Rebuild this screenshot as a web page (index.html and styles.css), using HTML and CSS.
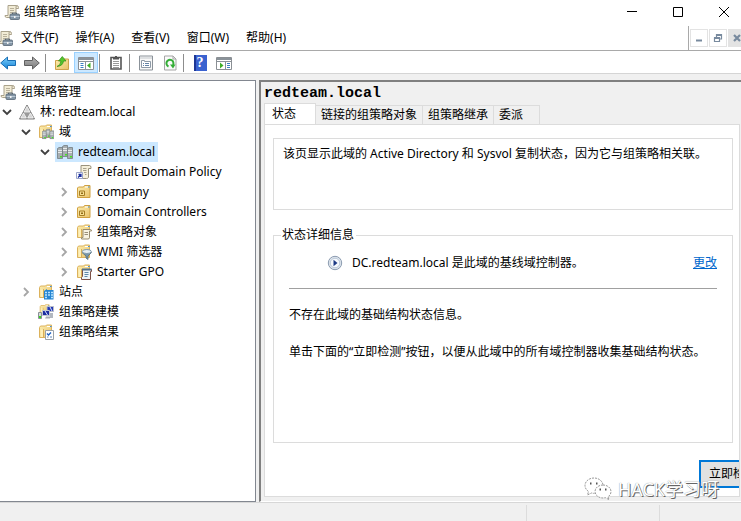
FILE: index.html
```html
<!DOCTYPE html>
<html lang="zh-CN">
  <head>
    <meta charset="utf-8">
    <title>组策略管理</title>
    <link rel="stylesheet" href="styles.css">
  </head>
  <body>
    <svg class="sprite" aria-hidden="true">
      <defs>
        <linearGradient id="gold" x1="0" y1="0" x2="1" y2="1">
          <stop offset="0" stop-color="#fdeeb0" />
          <stop offset="1" stop-color="#e8c26a" />
        </linearGradient>
        <linearGradient id="blue" x1="0" y1="0" x2="0" y2="1">
          <stop offset="0" stop-color="#7fd0fa" />
          <stop offset="1" stop-color="#1583d8" />
        </linearGradient>
        <linearGradient id="grey" x1="0" y1="0" x2="0" y2="1">
          <stop offset="0" stop-color="#b4b4b4" />
          <stop offset="1" stop-color="#7a7a7a" />
        </linearGradient>
      </defs>
      <symbol id="scroll" viewBox="0 0 16 16">
        <path d="M4 1.500h8.500q2 0 2 2v1h-2.500v9H2.500q-1.500 0-1.500-2h3z" fill="#f2ecd6" stroke="#aaa28c" />
        <path d="M12 4.500v-1.500q0-1.500 1.200-1.500" fill="none" stroke="#aaa28c" />
        <path d="M6 4.500h4M6 6.500h4M6 8.500h3" stroke="#b9b19b" />
      </symbol>
      <symbol id="gpm" viewBox="0 0 16 16">
        <use href="#scroll" />
        <path d="M8.500 10.500v-1.500h4v1.500" fill="none" stroke="#56636f" />
        <rect x="6" y="10" width="9.500" height="5.500" rx="1" fill="#8496a6" stroke="#566573" stroke-width=".8" />
        <path d="M6.500 12.500h9" stroke="#b8c7d4" />
        <path d="M10 12h1.500v2H10z" fill="#f3f3f3" />
      </symbol>
      <symbol id="folder" viewBox="0 0 16 16">
        <path d="M1.500 3.500l1-1.500h5l1-1h5v12.500h-12z" fill="url(#gold)" stroke="#dcb25c" />
        <path d="M9 2.500h3" stroke="#fff" />
        <path d="M12 2.500h1.500" stroke="#3b8fe0" />
        <path d="M2.500 5.500h3v7.500h-3z" fill="#fff0b8" />
        <path d="M5.500 5v8.500" stroke="#d9ae58" />
      </symbol>
      <symbol id="forest" viewBox="0 0 16 16">
        <path d="M8 1L15.500 15H.5z" fill="#9a9a9a" stroke="#7e7e7e" />
        <path d="M8 2.500l3 5.500H5zM4.500 9l2.800 5H1.800zM11.500 9l2.800 5H8.700z" fill="#d5d5d5" stroke="#fff" stroke-width=".7" />
      </symbol>
      <symbol id="tower" viewBox="0 0 6 12">
        <path d="M.5 1.500L2 .5h3.500v11h-5z" fill="#a8afb2" stroke="#747c80" stroke-width=".8" />
        <path d="M1 3.500h4M1 5.500h4" stroke="#e6eaeb" />
        <path d="M3 9h2v1.500H3z" fill="#43e321" />
      </symbol>
      <symbol id="servers" viewBox="0 0 16 16">
        <use href="#tower" x="5" y="1" width="6" height="12" />
        <use href="#tower" x="0" y="3" width="6" height="12" />
        <use href="#tower" x="10" y="3" width="6" height="12" />
      </symbol>
      <symbol id="domains" viewBox="0 0 16 16">
        <use href="#folder" />
        <use href="#servers" x="4" y="4" width="12" height="12" />
      </symbol>
      <symbol id="gpo-link" viewBox="0 0 16 16">
        <path d="M5 1.500h8.500q1.500 0 1.500 2v1h-2.500v9q-.5 1-2 1H3V12h2z" fill="#f5efda" stroke="#9a927c" />
        <path d="M7 4.500h3.500M7 6.500h3.500M8 8.500h2.500M9 10.500h1.500" stroke="#aaa28c" />
        <path d="M.5 8.500h6v6h-6z" fill="#fff" stroke="#9aa4c8" />
        <path d="M2 13.500l3-3M2.500 10.500H5V13" fill="none" stroke="#1a2fa0" stroke-width="1.300" />
      </symbol>
      <symbol id="ou" viewBox="0 0 16 16">
        <path d="M1.500 4l1-1h5l1-1.500h5.500v12h-12.500z" fill="url(#gold)" stroke="#d0a040" />
        <path d="M9 3h3" stroke="#fff" />
        <path d="M12 3h1.500" stroke="#3b8fe0" />
        <path d="M3.500 7h5v4.500h-5z" fill="#f7df93" stroke="#a67f25" />
        <path d="M5 8.500h2v1.500H5z" fill="#8f6a19" />
      </symbol>
      <symbol id="gpos" viewBox="0 0 16 16">
        <use href="#folder" />
        <path d="M7 5.500h7.500q1 0 1 1.500h-2v6.500q0 1.500-1.500 1.500H5.500v-1.500H7z" fill="#f8f3e2" stroke="#988c70" />
        <path d="M8.500 8.500h3.500M8.500 10.500h3.500" stroke="#998f79" />
      </symbol>
      <symbol id="wmi" viewBox="0 0 16 16">
        <use href="#folder" />
        <path d="M6 8.500h9.500l-3.500 3.500v3.500l-2-1.500v-2z" fill="#7896a8" stroke="#506c7d" stroke-width=".8" />
        <ellipse cx="10.800" cy="7.500" rx="4.500" ry="2" fill="#e6eff5" stroke="#7f99a9" />
      </symbol>
      <symbol id="starter" viewBox="0 0 16 16">
        <use href="#folder" />
        <path d="M6.500 5.500h9v2h-1v8h-9v-2l1-1z" fill="#eef4f8" stroke="#7c5146" />
        <path d="M6 5.500h9.500" stroke="#54718c" stroke-width="2" />
        <path d="M8.500 8.500h4M8.500 10.500h4M8.500 12.500h3" stroke="#5f88a8" />
      </symbol>
      <symbol id="sites" viewBox="0 0 16 16">
        <use href="#folder" />
        <path d="M6 7l3-2v1h6.500v9.500H6z" fill="#2585d2" />
        <path d="M7 8.500h2M10 8.500h2M13 8.500h2M7 11h2M10 11h2M13 11h2M7 13.500h2M13 13.500h2" stroke="#b8e3ff" stroke-width="1.300" />
      </symbol>
      <symbol id="modeling" viewBox="0 0 16 16">
        <use href="#folder" width="12" height="12" x="1" y="0" />
        <path d="M9 2.500h6.500v5H9z" fill="#2338b4" stroke="#b8bcc8" />
        <path d="M4.500 6.500h7v5h-7z" fill="#1d2da0" stroke="#c3c7d2" />
        <path d="M7 7l2.500 4M12 3l2 4" stroke="#d9e4ff" />
        <path d="M8 12.500h4v2H7z" fill="#a9adb3" />
        <path d="M.5 8.500h3v6h-3z" fill="#d7dadd" stroke="#8a9095" />
        <path d="M1 12h2v2H1z" fill="#39d421" />
        <path d="M12 9h3v5h-3z" fill="#b2b8c0" />
      </symbol>
      <symbol id="results" viewBox="0 0 16 16">
        <use href="#folder" />
        <path d="M7.500 6.500h8v9h-8z" fill="#fff" stroke="#9aa1a8" />
        <path d="M9 9.500l1.500 1.500L13 8.500" fill="none" stroke="#1c62c4" stroke-width="1.400" />
        <path d="M9 13h1.500M12 13h2" stroke="#5c84b6" />
      </symbol>
      <symbol id="open" viewBox="0 0 10 10"><path d="M1 3l4 4 4-4" fill="none" stroke="#404040" stroke-width="1.800" /></symbol>
      <symbol id="closed" viewBox="0 0 10 10"><path d="M3 1l4 4-4 4" fill="none" stroke="#a6a6a6" stroke-width="1.800" /></symbol>
      <symbol id="arrow" viewBox="0 0 16 16"><path d="M.7 8L7.500 2v3.500h8v5h-8V14z" /></symbol>
    </svg>

    <header class="title-bar">
      <svg class="icon"><use href="#gpm" /></svg>
      <h1>组策略管理</h1>
      <div class="window-buttons">
        <button type="button" aria-label="最小化"><svg viewBox="0 0 12 12"><path d="M1 5.500h10" /></svg></button>
        <button type="button" aria-label="最大化"><svg viewBox="0 0 12 12"><path d="M1.500 1.500h9v9h-9z" /></svg></button>
        <button type="button" aria-label="关闭"><svg viewBox="0 0 12 12"><path d="M1 1l10 10M11 1L1 11" /></svg></button>
      </div>
    </header>

    <nav class="menu-bar">
      <svg class="icon"><use href="#gpm" /></svg>
      <button type="button">文件(F)</button>
      <button type="button">操作(A)</button>
      <button type="button">查看(V)</button>
      <button type="button">窗口(W)</button>
      <button type="button">帮助(H)</button>
      <div class="child-buttons">
        <button type="button" aria-label="最小化子窗口"><svg viewBox="0 0 10 10"><path d="M2 7.500h6" stroke-width="2" /></svg></button>
        <button type="button" aria-label="还原子窗口"><svg viewBox="0 0 10 10"><path d="M1.500 5h5v3.500h-5zM3.500 4V1.500h5V6H7" stroke-width="1.200" /><path d="M1 5h6M3 2h6" stroke-width="2" /></svg></button>
        <button type="button" class="off" aria-label="关闭子窗口"><svg viewBox="0 0 10 10"><path d="M2 2l6 6M8 2L2 8" stroke-width="2.200" /></svg></button>
      </div>
    </nav>

    <div class="toolbar">
      <button type="button" aria-label="后退"><svg class="icon"><use href="#arrow" fill="url(#blue)" stroke="#1a6fb5" /></svg></button>
      <button type="button" aria-label="前进"><svg class="icon flip"><use href="#arrow" fill="url(#grey)" stroke="#606060" /></svg></button>
      <span class="separator"></span>
      <button type="button" aria-label="上一级">
        <svg class="icon" viewBox="0 0 16 16">
          <path d="M1.500 5.500h7l1-1.500h5v10.500h-13z" fill="url(#gold)" stroke="#cfa24b" />
          <path d="M3 11.500q3.500-1 4-5.500H4.500L8.300 1.500 12 6H9.500q-.5 5-6.500 5.500z" fill="#55c52c" stroke="#2f8c18" stroke-width=".7" />
        </svg>
      </button>
      <button type="button" class="active" aria-label="显示/隐藏控制台树">
        <svg class="icon" viewBox="0 0 16 16">
          <path d="M.5 2.500h15v12H.5z" fill="#fff" stroke="#8a8f94" />
          <path d="M1 4h14" stroke="#8a9299" stroke-width="2" />
          <path d="M1 6.500h14M7.500 7v7.500" stroke="#8a9299" />
          <path d="M2.500 8.500h3M2.500 10.500h3M2.500 12.500h3" stroke="#3b7fc4" />
          <path d="M12.500 7.500v6L9 10.500z" fill="#3fae28" />
        </svg>
      </button>
      <span class="separator"></span>
      <button type="button" aria-label="粘贴">
        <svg class="icon" viewBox="0 0 16 16">
          <path d="M3 2.500h10v11.500H3z" fill="#fff" stroke="#555" stroke-width="1.600" />
          <path d="M5 2h6v2.500H5zM7 1h2v2H7z" fill="#555" />
          <path d="M5 6.500h6M5 8.500h6M5 10.500h6M5 12.500h6" stroke="#999" />
        </svg>
      </button>
      <span class="separator"></span>
      <button type="button" aria-label="属性">
        <svg class="icon" viewBox="0 0 16 16">
          <path d="M1.500 1h13v14h-13z" fill="#f8f8f8" stroke="#8b9299" />
          <path d="M2 3h12" stroke="#c3c8cc" />
          <path d="M3.500 5.500h3v1h6v6h-9z" fill="#fff" stroke="#8e9aa6" />
          <path d="M5 8.500h1M7 8.500h4M5 10.500h1M7 10.500h4" stroke="#6483a6" />
        </svg>
      </button>
      <button type="button" aria-label="刷新">
        <svg class="icon" viewBox="0 0 16 16">
          <path d="M2.500 1h8.500l3 3v11H2.500z" fill="#fafafa" stroke="#a5a5a5" />
          <path d="M11 1v3h3" fill="none" stroke="#a5a5a5" />
          <path d="M6.500 11.500a3.500 3.500 0 1 1 4.500-1.500" fill="none" stroke="#34ad36" stroke-width="2" />
          <path d="M8 9.500h5.500L11 13.500z" fill="#34ad36" />
        </svg>
      </button>
      <span class="separator"></span>
      <button type="button" class="help" aria-label="帮助"><span>?</span></button>
      <button type="button" aria-label="显示/隐藏操作窗格">
        <svg class="icon" viewBox="0 0 16 16">
          <path d="M.5 2.500h15v12H.5z" fill="#fff" stroke="#8a8f94" />
          <path d="M1 4h14" stroke="#8a9299" stroke-width="2" />
          <path d="M1 6.500h14M9.500 7v7.500" stroke="#8a9299" />
          <path d="M11 8.500h3M11 10.500h3M11 12.500h3" stroke="#3b7fc4" />
          <path d="M4 7.500v6L7.500 10.500z" fill="#3fae28" />
        </svg>
      </button>
    </div>

    <main class="workspace">
      <aside class="tree">
        <div class="node"><svg class="icon"><use href="#gpm" /></svg><span class="label">组策略管理</span></div>
        <ul>
          <li>
            <div class="node"><svg class="twisty"><use href="#open" /></svg><svg class="icon"><use href="#forest" /></svg><span class="label">林: redteam.local</span></div>
            <ul>
              <li>
                <div class="node"><svg class="twisty"><use href="#open" /></svg><svg class="icon"><use href="#domains" /></svg><span class="label">域</span></div>
                <ul>
                  <li>
                    <div class="node selected"><svg class="twisty"><use href="#open" /></svg><svg class="icon"><use href="#servers" /></svg><span class="label">redteam.local</span></div>
                    <ul>
                      <li class="node"><svg class="twisty"></svg><svg class="icon"><use href="#gpo-link" /></svg><span class="label">Default Domain Policy</span></li>
                      <li class="node"><svg class="twisty"><use href="#closed" /></svg><svg class="icon"><use href="#ou" /></svg><span class="label">company</span></li>
                      <li class="node"><svg class="twisty"><use href="#closed" /></svg><svg class="icon"><use href="#ou" /></svg><span class="label">Domain Controllers</span></li>
                      <li class="node"><svg class="twisty"><use href="#closed" /></svg><svg class="icon"><use href="#gpos" /></svg><span class="label">组策略对象</span></li>
                      <li class="node"><svg class="twisty"><use href="#closed" /></svg><svg class="icon"><use href="#wmi" /></svg><span class="label">WMI 筛选器</span></li>
                      <li class="node"><svg class="twisty"><use href="#closed" /></svg><svg class="icon"><use href="#starter" /></svg><span class="label">Starter GPO</span></li>
                    </ul>
                  </li>
                </ul>
              </li>
              <li class="node"><svg class="twisty"><use href="#closed" /></svg><svg class="icon"><use href="#sites" /></svg><span class="label">站点</span></li>
              <li class="node"><svg class="twisty"></svg><svg class="icon"><use href="#modeling" /></svg><span class="label">组策略建模</span></li>
              <li class="node"><svg class="twisty"></svg><svg class="icon"><use href="#results" /></svg><span class="label">组策略结果</span></li>
            </ul>
          </li>
        </ul>
      </aside>

      <section class="details">
        <h2>redteam.local</h2>
        <div class="tabs" role="tablist">
          <button type="button" role="tab" aria-selected="true" class="tab current">状态</button>
          <button type="button" role="tab" aria-selected="false" class="tab">链接的组策略对象</button>
          <button type="button" role="tab" aria-selected="false" class="tab">组策略继承</button>
          <button type="button" role="tab" aria-selected="false" class="tab last">委派</button>
        </div>
        <div class="panel" role="tabpanel">
          <div class="intro">
            <p>该页显示此域的 Active Directory 和 Sysvol 复制状态，因为它与组策略相关联。</p>
          </div>
          <fieldset class="status">
            <legend>状态详细信息</legend>
            <div class="baseline">
              <svg class="icon" viewBox="0 0 16 16">
                <circle cx="8" cy="8" r="6.700" fill="#dfe6ee" stroke="#8b9bb0" />
                <circle cx="8" cy="8" r="4.800" fill="#f5f8fc" stroke="#bac8d8" />
                <path d="M6.500 4.800v6.400L10.500 8z" fill="#1d3a84" />
              </svg>
              <span>DC.redteam.local 是此域的基线域控制器。</span>
              <a href="#">更改</a>
            </div>
            <hr>
            <p>不存在此域的基础结构状态信息。</p>
            <p>单击下面的“立即检测”按钮，以便从此域中的所有域控制器收集基础结构状态。</p>
          </fieldset>
          <button type="button" class="detect">立即检测</button>
        </div>
      </section>
    </main>

    <footer class="status-bar"><span></span><span></span><span></span></footer>

    <div class="watermark">
      <svg viewBox="0 0 28 24">
        <path d="M10 1C5 1 1 4.300 1 8.500c0 2.500 1.300 4.500 3.500 6L3.500 18l4-2 3 .5" />
        <path d="M19 7.500C18 3.500 14.500 1 10 1" />
        <path d="M19 8c-4.500 0-8 3-8 6.500S14.500 21 19 21l2.500-.3 3.500 2-1-3c2-1.200 3-3 3-5.200C27 11 23.500 8 19 8z" />
        <path d="M6 6.500h1.500M12 6.500h1.500M15.500 12.500h1.500M21 12.500h1.500" class="eyes" />
      </svg>
      <span>HACK学习呀</span>
    </div>
  </body>
</html>
```

FILE: styles.css
```css
:root {
  --face: #f0f0f0;
  --line: #dcdcdc;
  --edge: #828790;
  --accent: #0078d7;
}

* {
  box-sizing: border-box;
  margin: 0;
  padding: 0;
}

body {
  display: flex;
  flex-direction: column;
  height: 100vh;
  overflow: hidden;
  background: var(--face);
  color: #000;
  font: 12px/20px "Noto Sans", "Noto Sans CJK SC", sans-serif;
}

button {
  border: none;
  background: none;
  color: inherit;
  font: inherit;
}

ul {
  list-style: none;
}

.sprite {
  position: absolute;
  width: 0;
  height: 0;
}

.icon {
  flex: none;
  width: 16px;
  height: 16px;
}

.flip {
  transform: scaleX(-1);
}

/* title bar */
.title-bar {
  display: flex;
  align-items: center;
  height: 24px;
  padding-left: 4px;
  gap: 4px;
  background: #fff;
}

.title-bar h1 {
  font-size: 12px;
  font-weight: normal;
}

.window-buttons {
  display: flex;
  margin-left: auto;
  margin-right: -6px;
}

.window-buttons button {
  display: flex;
  align-items: center;
  justify-content: center;
  width: 46px;
  height: 22px;
}

.window-buttons svg {
  width: 12px;
  height: 12px;
  fill: none;
  stroke: #000;
}

/* menu */
.menu-bar {
  display: flex;
  align-items: center;
  height: 27px;
  padding-top: 2px;
  gap: 17px;
  background: #fff;
  border-bottom: 1px solid #a9a9a9;
}

.menu-bar .icon {
  margin-left: -3px;
  margin-right: -9px;
}

.child-buttons {
  display: flex;
  align-items: center;
  align-self: flex-end;
  height: 24px;
  gap: 1px;
  margin-left: auto;
  margin-right: -5px;
  padding-left: 1px;
  border-left: 1px solid #a9a9a9;
}

.child-buttons button {
  display: flex;
  align-items: center;
  justify-content: center;
  width: 18px;
  height: 18px;
  border: 1px solid #e3e3e3;
}

.child-buttons .off {
  background: #e3e3e3;
}

.child-buttons svg {
  width: 10px;
  height: 10px;
  fill: none;
  stroke: #788a9e;
}

/* toolbar */
.toolbar {
  display: flex;
  align-items: center;
  height: 23px;
  padding-top: 1px;
  background: #fff;
  border-bottom: 1px solid #d5d5d5;
}

.toolbar button {
  display: flex;
  align-items: center;
  justify-content: center;
  width: 24px;
  height: 21px;
}

.toolbar button:first-child {
  width: 20px;
  padding-right: 4px;
}

.toolbar .active {
  background: #cce8ff;
  border: 1px solid #99d1ff;
}

.separator {
  width: 1px;
  height: 18px;
  margin: 0 4px 0 1px;
  background: #8d8d8d;
}

.help span {
  width: 13px;
  height: 16px;
  background: linear-gradient(90deg, #1d3796 2px, #3a62d0 2px);
  color: #fff;
  font: bold 14px/16px "Liberation Serif", serif;
  text-align: center;
}

/* main area */
.workspace {
  display: flex;
  flex: 1;
  min-height: 0;
  padding-top: 6px;
  gap: 3px;
}

.tree {
  flex: none;
  width: 256px;
  padding-top: 1px;
  background: #fff;
  border: 1px solid var(--edge);
  border-left: none;
}

.tree ul ul {
  margin-left: 19px;
}

.node {
  display: flex;
  align-items: center;
  height: 20px;
}

.twisty {
  flex: none;
  width: 10px;
  height: 10px;
  margin: 0 7px 0 2px;
}

.label {
  padding: 0 3px 0 5px;
  white-space: nowrap;
}

.selected .icon,
.selected .label {
  background: #cce8ff;
}

.selected .icon {
  box-sizing: content-box;
  margin: 0 0 0 -2px;
  padding: 2px 0 2px 2px;
}

.details {
  display: flex;
  flex: 1;
  flex-direction: column;
  min-width: 0;
  padding: 1px 1px 4px 3px;
  border-top: 2px solid #808080;
  border-left: 2px solid #808080;
  border-bottom: 1px solid #fff;
}

.details h2 {
  padding-top: 1px;
  font: bold 15px/19px "Liberation Mono", monospace;
}

.tabs {
  display: flex;
  align-items: flex-end;
}

.tab {
  height: 19px;
  padding: 0 5px;
  border: 1px solid var(--line);
  border-width: 1px 1px 0 0;
  line-height: 18px;
  white-space: nowrap;
}

.current {
  width: 52px;
  height: 21px;
  padding: 0 12px 0 7px;
  border-left-width: 1px;
  background: #fff;
  text-align: left;
}

.last {
  width: 46px;
  text-align: left;
}

.panel {
  display: flex;
  flex: 1;
  flex-direction: column;
  min-height: 0;
  padding: 13px 6px 8px 8px;
  overflow: hidden;
  background: #fff;
  border: 1px solid var(--line);
}

.intro {
  height: 72px;
  padding: 5px 9px;
  border: 1px solid var(--line);
}

.status {
  flex: 1;
  min-width: 0;
  margin-top: 15px;
  padding: 10px 15px;
  border: 1px solid var(--line);
}

.status legend {
  margin-left: -8px;
  padding: 0 2px 0 1px;
  line-height: 20px;
}

.baseline {
  display: flex;
  align-items: center;
  gap: 9px;
  padding-left: 38px;
  margin-top: -2px;
}

.baseline a {
  margin-left: auto;
  color: #0066cc;
}

.status hr {
  margin: 15px 0 16px;
  border: none;
  border-top: 1px solid #a0a0a0;
}

.status p {
  margin-bottom: 17px;
  white-space: nowrap;
}

.detect {
  flex: none;
  align-self: flex-end;
  width: 90px;
  height: 28px;
  margin-top: 17px;
  margin-right: -56px;
  padding-left: 8px;
  background: #e1e1e1;
  border: 2px solid var(--accent);
  text-align: left;
}

/* status bar */
.status-bar {
  display: flex;
  height: 19px;
  padding-top: 2px;
  border-top: 1px solid #d7d7d7;
}

.status-bar span:first-child {
  flex: 1;
}

.status-bar span + span {
  width: 133px;
  border-left: 1px solid var(--line);
}

.status-bar span:last-child {
  width: 82px;
}

/* account mark over the lower right corner */
.watermark {
  position: absolute;
  right: 22px;
  bottom: 19px;
  display: flex;
  align-items: center;
  gap: 6px;
  color: #fff;
  font-size: 18px;
  line-height: 26px;
  text-shadow: 1px 1px 0 #666, 0 0 1px #777;
}

.watermark svg {
  width: 28px;
  height: 24px;
  fill: #fff;
  stroke: #999;
  stroke-dasharray: 2 1;
}

.watermark .eyes {
  stroke: #555;
  stroke-width: 2;
}
```
